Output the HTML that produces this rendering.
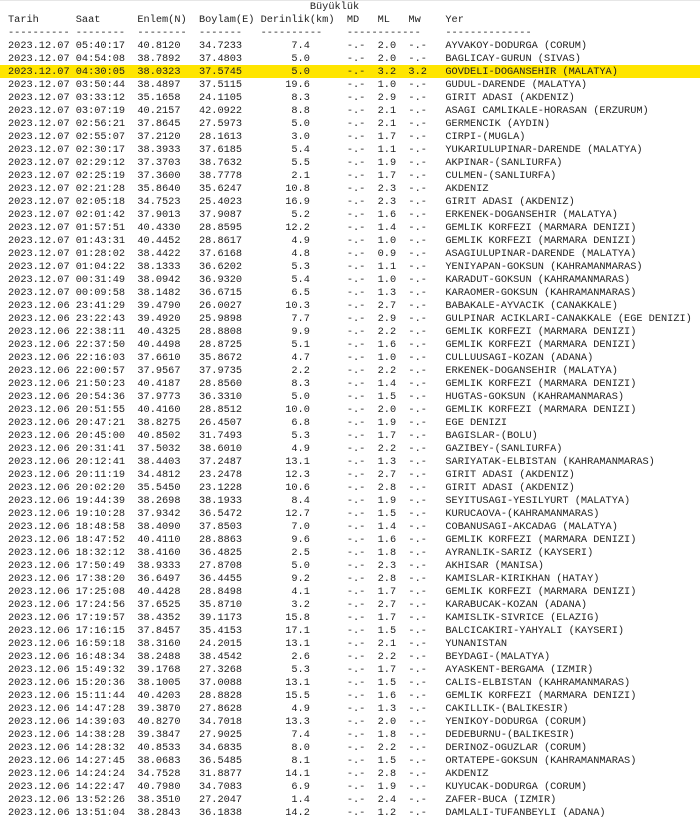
<!DOCTYPE html>
<html><head><meta charset="utf-8"><style>
html,body{margin:0;padding:0;background:#fff;width:700px;height:818px;overflow:hidden}
.top{position:absolute;left:0;top:0;width:700px;height:1px;background:#e6e6e6}
pre{position:absolute;left:8px;top:1px;margin:0;font-family:"Liberation Mono",monospace;font-size:10.28px;line-height:13px;color:#1e1e1e;white-space:pre}
.hl{position:absolute;left:0;top:65px;width:700px;height:13px;background:#ffe500}
</style></head><body>
<div class="top"></div>
<div class="hl"></div>
<pre>                                                 Büyüklük
Tarih      Saat      Enlem(N)  Boylam(E) Derinlik(km)  MD   ML   Mw    Yer
---------- --------  --------  -------   ----------    ------------    --------------
2023.12.07 05:40:17  40.8120   34.7233        7.4      -.-  2.0  -.-   AYVAKOY-DODURGA (CORUM)
2023.12.07 04:54:08  38.7892   37.4803        5.0      -.-  2.0  -.-   BAGLICAY-GURUN (SIVAS)
2023.12.07 04:30:05  38.0323   37.5745        5.0      -.-  3.2  3.2   GOVDELI-DOGANSEHIR (MALATYA)
2023.12.07 03:50:44  38.4897   37.5115       19.6      -.-  1.0  -.-   GUDUL-DARENDE (MALATYA)
2023.12.07 03:33:12  35.1658   24.1105        8.3      -.-  2.9  -.-   GIRIT ADASI (AKDENIZ)
2023.12.07 03:07:19  40.2157   42.0922        8.8      -.-  2.1  -.-   ASAGI CAMLIKALE-HORASAN (ERZURUM)
2023.12.07 02:56:21  37.8645   27.5973        5.0      -.-  2.1  -.-   GERMENCIK (AYDIN)
2023.12.07 02:55:07  37.2120   28.1613        3.0      -.-  1.7  -.-   CIRPI-(MUGLA)
2023.12.07 02:30:17  38.3933   37.6185        5.4      -.-  1.1  -.-   YUKARIULUPINAR-DARENDE (MALATYA)
2023.12.07 02:29:12  37.3703   38.7632        5.5      -.-  1.9  -.-   AKPINAR-(SANLIURFA)
2023.12.07 02:25:19  37.3600   38.7778        2.1      -.-  1.7  -.-   CULMEN-(SANLIURFA)
2023.12.07 02:21:28  35.8640   35.6247       10.8      -.-  2.3  -.-   AKDENIZ
2023.12.07 02:05:18  34.7523   25.4023       16.9      -.-  2.3  -.-   GIRIT ADASI (AKDENIZ)
2023.12.07 02:01:42  37.9013   37.9087        5.2      -.-  1.6  -.-   ERKENEK-DOGANSEHIR (MALATYA)
2023.12.07 01:57:51  40.4330   28.8595       12.2      -.-  1.4  -.-   GEMLIK KORFEZI (MARMARA DENIZI)
2023.12.07 01:43:31  40.4452   28.8617        4.9      -.-  1.0  -.-   GEMLIK KORFEZI (MARMARA DENIZI)
2023.12.07 01:28:02  38.4422   37.6168        4.8      -.-  0.9  -.-   ASAGIULUPINAR-DARENDE (MALATYA)
2023.12.07 01:04:22  38.1333   36.6202        5.3      -.-  1.1  -.-   YENIYAPAN-GOKSUN (KAHRAMANMARAS)
2023.12.07 00:31:49  38.0942   36.9320        5.4      -.-  1.0  -.-   KARADUT-GOKSUN (KAHRAMANMARAS)
2023.12.07 00:09:58  38.1482   36.6715        6.5      -.-  1.3  -.-   KARAOMER-GOKSUN (KAHRAMANMARAS)
2023.12.06 23:41:29  39.4790   26.0027       10.3      -.-  2.7  -.-   BABAKALE-AYVACIK (CANAKKALE)
2023.12.06 23:22:43  39.4920   25.9898        7.7      -.-  2.9  -.-   GULPINAR ACIKLARI-CANAKKALE (EGE DENIZI)
2023.12.06 22:38:11  40.4325   28.8808        9.9      -.-  2.2  -.-   GEMLIK KORFEZI (MARMARA DENIZI)
2023.12.06 22:37:50  40.4498   28.8725        5.1      -.-  1.6  -.-   GEMLIK KORFEZI (MARMARA DENIZI)
2023.12.06 22:16:03  37.6610   35.8672        4.7      -.-  1.0  -.-   CULLUUSAGI-KOZAN (ADANA)
2023.12.06 22:00:57  37.9567   37.9735        2.2      -.-  2.2  -.-   ERKENEK-DOGANSEHIR (MALATYA)
2023.12.06 21:50:23  40.4187   28.8560        8.3      -.-  1.4  -.-   GEMLIK KORFEZI (MARMARA DENIZI)
2023.12.06 20:54:36  37.9773   36.3310        5.0      -.-  1.5  -.-   HUGTAS-GOKSUN (KAHRAMANMARAS)
2023.12.06 20:51:55  40.4160   28.8512       10.0      -.-  2.0  -.-   GEMLIK KORFEZI (MARMARA DENIZI)
2023.12.06 20:47:21  38.8275   26.4507        6.8      -.-  1.9  -.-   EGE DENIZI
2023.12.06 20:45:00  40.8502   31.7493        5.3      -.-  1.7  -.-   BAGISLAR-(BOLU)
2023.12.06 20:31:41  37.5032   38.6010        4.9      -.-  2.2  -.-   GAZIBEY-(SANLIURFA)
2023.12.06 20:12:41  38.4403   37.2487       13.1      -.-  1.3  -.-   SARIYATAK-ELBISTAN (KAHRAMANMARAS)
2023.12.06 20:11:19  34.4812   23.2478       12.3      -.-  2.7  -.-   GIRIT ADASI (AKDENIZ)
2023.12.06 20:02:20  35.5450   23.1228       10.6      -.-  2.8  -.-   GIRIT ADASI (AKDENIZ)
2023.12.06 19:44:39  38.2698   38.1933        8.4      -.-  1.9  -.-   SEYITUSAGI-YESILYURT (MALATYA)
2023.12.06 19:10:28  37.9342   36.5472       12.7      -.-  1.5  -.-   KURUCAOVA-(KAHRAMANMARAS)
2023.12.06 18:48:58  38.4090   37.8503        7.0      -.-  1.4  -.-   COBANUSAGI-AKCADAG (MALATYA)
2023.12.06 18:47:52  40.4110   28.8863        9.6      -.-  1.6  -.-   GEMLIK KORFEZI (MARMARA DENIZI)
2023.12.06 18:32:12  38.4160   36.4825        2.5      -.-  1.8  -.-   AYRANLIK-SARIZ (KAYSERI)
2023.12.06 17:50:49  38.9333   27.8708        5.0      -.-  2.3  -.-   AKHISAR (MANISA)
2023.12.06 17:38:20  36.6497   36.4455        9.2      -.-  2.8  -.-   KAMISLAR-KIRIKHAN (HATAY)
2023.12.06 17:25:08  40.4428   28.8498        4.1      -.-  1.7  -.-   GEMLIK KORFEZI (MARMARA DENIZI)
2023.12.06 17:24:56  37.6525   35.8710        3.2      -.-  2.7  -.-   KARABUCAK-KOZAN (ADANA)
2023.12.06 17:19:57  38.4352   39.1173       15.8      -.-  1.7  -.-   KAMISLIK-SIVRICE (ELAZIG)
2023.12.06 17:16:15  37.8457   35.4153       17.1      -.-  1.5  -.-   BALCICAKIRI-YAHYALI (KAYSERI)
2023.12.06 16:59:18  38.3160   24.2015       13.1      -.-  2.1  -.-   YUNANISTAN
2023.12.06 16:48:34  38.2488   38.4542        2.6      -.-  2.2  -.-   BEYDAGI-(MALATYA)
2023.12.06 15:49:32  39.1768   27.3268        5.3      -.-  1.7  -.-   AYASKENT-BERGAMA (IZMIR)
2023.12.06 15:20:36  38.1005   37.0088       13.1      -.-  1.5  -.-   CALIS-ELBISTAN (KAHRAMANMARAS)
2023.12.06 15:11:44  40.4203   28.8828       15.5      -.-  1.6  -.-   GEMLIK KORFEZI (MARMARA DENIZI)
2023.12.06 14:47:28  39.3870   27.8628        4.9      -.-  1.3  -.-   CAKILLIK-(BALIKESIR)
2023.12.06 14:39:03  40.8270   34.7018       13.3      -.-  2.0  -.-   YENIKOY-DODURGA (CORUM)
2023.12.06 14:38:28  39.3847   27.9025        7.4      -.-  1.8  -.-   DEDEBURNU-(BALIKESIR)
2023.12.06 14:28:32  40.8533   34.6835        8.0      -.-  2.2  -.-   DERINOZ-OGUZLAR (CORUM)
2023.12.06 14:27:45  38.0683   36.5485        8.1      -.-  1.5  -.-   ORTATEPE-GOKSUN (KAHRAMANMARAS)
2023.12.06 14:24:24  34.7528   31.8877       14.1      -.-  2.8  -.-   AKDENIZ
2023.12.06 14:22:47  40.7980   34.7083        6.9      -.-  1.9  -.-   KUYUCAK-DODURGA (CORUM)
2023.12.06 13:52:26  38.3510   27.2047        1.4      -.-  2.4  -.-   ZAFER-BUCA (IZMIR)
2023.12.06 13:51:04  38.2843   36.1838       14.2      -.-  1.2  -.-   DAMLALI-TUFANBEYLI (ADANA)
</pre>
</body></html>
